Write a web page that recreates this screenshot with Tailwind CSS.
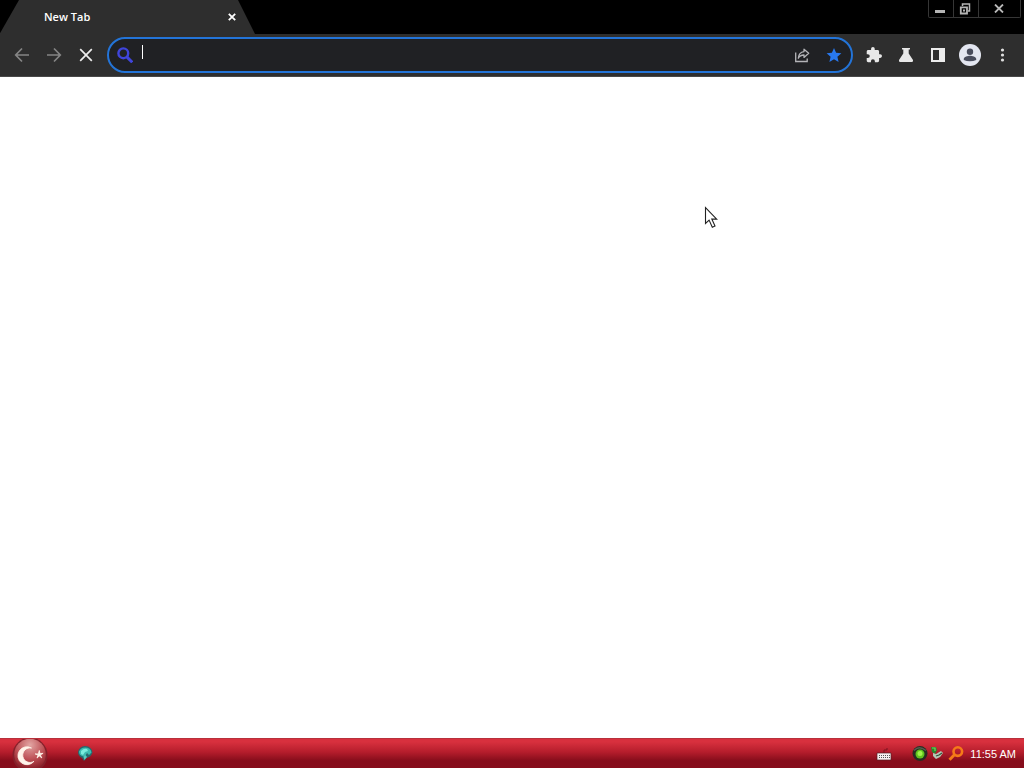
<!DOCTYPE html>
<html lang="en">
<head>
<meta charset="utf-8">
<title>New Tab</title>
<script src="https://cdn.jsdelivr.net/npm/@tailwindcss/browser@4"></script>
</head>
<body class="relative flex h-screen flex-col overflow-hidden bg-white font-['Open_Sans',sans-serif]">
<header>
  <div class="flex h-[34px] items-start justify-between bg-black">
    <div class="flex h-full w-64 items-center justify-between bg-[#2e2e2e] pr-4 pl-11 text-white [clip-path:polygon(19px_0,238px_0,255px_100%,0_100%,0_98%)]">
      <span class="text-[11px] leading-4 font-semibold">New Tab</span>
      <button aria-label="Close tab" class="flex size-4 items-center justify-center">
        <svg class="size-2" viewBox="0 0 8 8" stroke="#fff" stroke-width="1.800"><path d="M.8.8 7.2 7.2M7.2.8.8 7.2"/></svg>
      </button>
    </div>
    <div class="mr-[3px] flex h-[18px] rounded-b-xs border border-t-0 border-[#363636]">
      <button aria-label="Minimize" class="flex w-6 items-center justify-center pr-[2px]">
        <svg class="h-4 w-3" viewBox="0 0 12 16"><path d="M1 9h10v3H1z" fill="#b5b5b5"/></svg>
      </button>
      <button aria-label="Restore" class="flex w-[25px] items-center justify-center border-l border-[#363636] pr-[3px]">
        <svg class="size-3" viewBox="0 0 12 12" fill="none" stroke="#b5b5b5"><path d="M3.500 3V1h7v7H9" stroke-width="1.500"/><path d="M1.800 4.300h6.200v6.200H1.800z" stroke-width="1.800"/><path d="M4 6.500h2v2H4z" fill="#b5b5b5" stroke="none"/></svg>
      </button>
      <button aria-label="Close window" class="flex w-[42px] items-center justify-center border-l border-[#363636] pr-[2px]">
        <svg class="h-[9px] w-[10px]" viewBox="0 0 10 9" stroke="#b8b8b8" stroke-width="1.800"><path d="m1 .5 8 8M9 .5l-8 8"/></svg>
      </button>
    </div>
  </div>
  <nav class="flex h-[43px] items-center border-b border-[#484848] bg-[#2e2e2e] pr-[6px] pl-[6px]">
    <button aria-label="Back" class="flex size-8 items-center justify-center">
      <svg class="size-4" viewBox="0 0 16 16" fill="none" stroke="#858585" stroke-width="1.700"><path d="M15 8H2M8 1.500 1.700 8 8 14.500"/></svg>
    </button>
    <button aria-label="Forward" class="flex size-8 items-center justify-center">
      <svg class="size-4" viewBox="0 0 16 16" fill="none" stroke="#858585" stroke-width="1.700"><path d="M1 8h13M8 1.500 14.300 8 8 14.500"/></svg>
    </button>
    <button aria-label="Stop loading" class="flex size-8 items-center justify-center">
      <svg class="size-4" viewBox="0 0 16 16" stroke="#ededed" stroke-width="1.700"><path d="m2.200 2.200 11.600 11.600M13.800 2.200 2.200 13.800"/></svg>
    </button>
    <div class="ml-[5px] flex h-9 min-w-0 flex-1 items-center rounded-full border-2 border-[#2374d8] bg-[#202124]">
      <svg class="ml-2 size-4 shrink-0" viewBox="0 0 16 16" fill="none" stroke="#3f45dc"><circle cx="6.300" cy="6.300" r="4.900" stroke-width="2.400"/><path d="m9.600 9.600 5.700 5.700" stroke-width="3"/></svg>
      <input aria-label="Address and search bar" class="ml-2 h-8 min-w-0 flex-1 bg-transparent text-sm text-white caret-transparent outline-none">
      <button aria-label="Share" class="flex size-8 items-center justify-center">
        <svg class="size-4" viewBox="0 0 16 16" fill="none" stroke="#b4b4b8" stroke-width="1.300"><path d="M1.700 5.500v9h11.500V11.500"/><path d="M10 2.200 14.700 6.300 10 10.400V8C7.300 8 5.500 8.900 4.300 11.200 4.600 7.500 6.600 5 10 4.600z" stroke-linejoin="round"/></svg>
      </button>
      <button aria-label="Bookmark this tab" class="mr-[1px] flex size-8 items-center justify-center">
        <svg class="size-4" viewBox="0 0 16 16" fill="#2878ee"><path d="m8 .9 2.100 4.900 5.300.5-4 3.500 1.200 5.200L8 12.300 3.400 15l1.200-5.200-4-3.500 5.300-.5z"/></svg>
      </button>
    </div>
    <button aria-label="Extensions" class="ml-[5px] flex size-8 items-center justify-center">
      <svg class="size-4" viewBox="1 1 22 22" fill="#e8e8e8"><path d="M20.500 11H19V7c0-1.100-.9-2-2-2h-4V3.500a2.500 2.500 0 0 0-5 0V5H4c-1.100 0-2 .9-2 2v3.800h1.500a2.700 2.700 0 0 1 0 5.400H2V20c0 1.100.9 2 2 2h3.800v-1.500a2.700 2.700 0 0 1 5.400 0V22H17c1.100 0 2-.9 2-2v-4h1.500a2.500 2.500 0 0 0 0-5z"/></svg>
    </button>
    <button aria-label="Experiments" class="flex size-8 items-center justify-center">
      <svg class="size-4" viewBox="0 0 16 16" fill="#e8e8e8"><path d="M4 1h8v1.600h-1.300v4L15 13q.6 2-1.200 2H2.200Q.4 15 1 13l4.300-6.400v-4H4z"/></svg>
    </button>
    <button aria-label="Side panel" class="flex size-8 items-center justify-center">
      <svg class="size-4" viewBox="0 0 16 16"><path d="M1 1h14v14H1z" fill="#ececec"/><path d="M3 3h6v10H3z" fill="#2e2e2e"/></svg>
    </button>
    <button aria-label="Profile" class="flex size-8 items-center justify-center">
      <svg class="size-[22px]" viewBox="0 0 22 22"><circle cx="11" cy="11" r="11" fill="#e3e6f0"/><circle cx="11" cy="7.800" r="3.200" fill="#484c5c"/><path d="M4.800 16v-1.200c0-2 4-3.100 6.200-3.100s6.200 1.100 6.200 3.100V16q-2.700 1.300-6.200 1.300t-6.200-1.300" fill="#484c5c"/></svg>
    </button>
    <button aria-label="Menu" class="flex size-8 items-center justify-center">
      <svg class="size-4" viewBox="0 0 16 16" fill="#e0e0e0"><circle cx="8.500" cy="3" r="1.600"/><circle cx="8.500" cy="8" r="1.600"/><circle cx="8.500" cy="13" r="1.600"/></svg>
    </button>
  </nav>
</header>
<div class="absolute top-[45px] left-[142px] h-[14px] w-px bg-white"></div>
<main class="flex-1 bg-white"></main>
<footer class="flex h-[30px] items-center justify-between border-t border-[#b8303b] bg-linear-to-b from-[#d8303e] from-10% via-[#b51d2c] via-45% to-[#860d1b] to-75% pr-2 pl-3">
  <div class="flex items-center gap-[29px]">
    <button aria-label="Start" class="flex h-[29px] w-9 items-center">
      <svg class="h-[29px] w-9" viewBox="0 0 36 29"><defs><radialGradient id="orb" cx=".5" cy=".2" r=".75"><stop offset="0" stop-color="#e2a5a3"/><stop offset=".6" stop-color="#bd5055"/><stop offset="1" stop-color="#8d2029"/></radialGradient></defs><circle cx="18" cy="16" r="17.500" fill="#84202a"/><circle cx="18" cy="15.500" r="15.800" fill="url(#orb)"/><path d="M19.500 9A9 9 0 1 0 22 22.300 7.300 7.300 0 1 1 19.500 9z" fill="#fff4ea" stroke="#fff4ea" stroke-width=".8"/><path d="m27.300 11.500.7 3.100 3.100-.3-2.700 1.700 1.400 2.900-2.500-2-2.300 2.200 1-3-2.900-1.200h3.200z" fill="#fff4ea" stroke="#fff4ea" stroke-width=".8"/></svg>
    </button>
    <button aria-label="Messenger" class="flex size-4 items-center justify-center">
      <svg class="size-4" viewBox="0 0 16 16"><path d="M1 6Q2 .5 8 0q7 .5 7.500 6.500Q14 11 9.500 12L7 15l-2-3Q1 10 1 6" fill="#27696d"/><path d="M2 5.500Q4 1.500 8 1.500q5.500 0 6.500 5L12 9l-2-2-2.500 4L5 10Q2 9 2 5.500" fill="#3dbcb0"/><path d="M4 5q3-3 6-2l1 2-3 1-2 3-2-1z" fill="#7beddd"/><path d="m6.500 11 2-2 1.500 2-2.500 3z" fill="#5acbbd"/></svg>
    </button>
  </div>
  <div class="flex items-center">
    <button aria-label="Keyboard" class="mr-5 flex size-4 items-center justify-center">
      <svg class="size-4" viewBox="0 0 16 16"><path d="M8 7V4h3V2" fill="none" stroke="#7c1520"/><path d="M1 7h14v7H1z" fill="#f6f0f0" stroke="#542027" stroke-width=".7"/><path d="M3 9.500h11M3 11.500h11" stroke="#555" stroke-dasharray="1 1"/></svg>
    </button>
    <svg class="size-4" viewBox="0 0 16 16"><circle cx="8" cy="7.500" r="7.500" fill="#262d20"/><path d="M2 4.500Q7-1 14 4.500" fill="none" stroke="#565c50" stroke-width="1.200"/><circle cx="8" cy="8" r="4.500" fill="#5fc51c"/><circle cx="8" cy="7.500" r="2.500" fill="#a1f24c"/></svg>
    <svg class="ml-[2px] size-4" viewBox="0 0 16 16"><path d="M1 1h5l1 3-2 4-3-2z" fill="#28862c"/><path d="m3 7 3 1 5-3 2 2-3 4-4 2-3-3z" fill="#b5c8b5"/><path d="m6 10 3-1 3-2" fill="none" stroke="#345037" stroke-width="1.200"/><path d="M2 2h3v3" fill="none" stroke="#70d35a" stroke-width="1.200"/></svg>
    <svg class="ml-[2px] size-4" viewBox="0 0 16 16" fill="none" stroke="#f57a18"><circle cx="9.800" cy="5.600" r="4.300" stroke-width="2.600"/><path d="m6.700 8.500-5.200 5.200" stroke-width="3"/></svg>
    <time class="ml-[6px] font-['Liberation_Sans',sans-serif] text-[11px] leading-4 text-white">11:55 AM</time>
  </div>
</footer>
<svg class="pointer-events-none absolute top-[206px] left-[704px] h-6 w-4" viewBox="0 0 16 24"><path d="M1.500 1.500v16l3.600-3.400 3.200 7.100 2.700-1.200-3.200-6.900h4.900z" fill="#fff" stroke="#222" stroke-width="1.100"/></svg>
</body>
</html>
